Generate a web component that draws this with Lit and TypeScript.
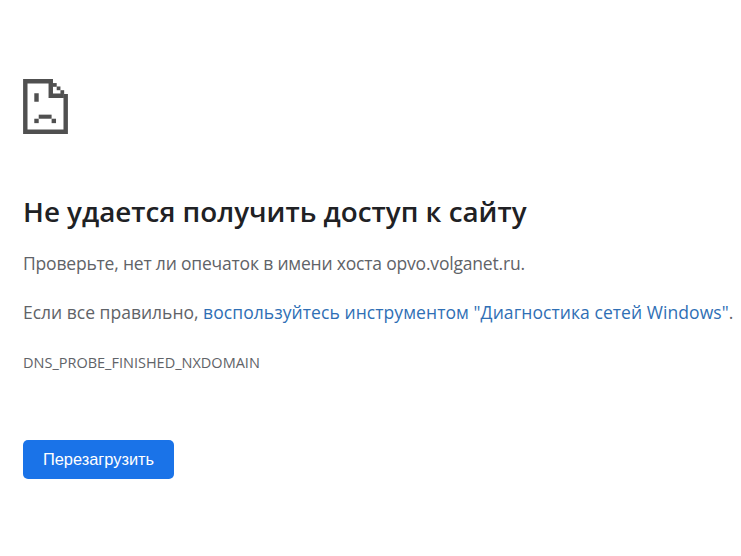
import { LitElement, html, css } from "lit";
import { customElement } from "lit/decorators.js";

@customElement("app-root")
export class AppRoot extends LitElement {
  static styles = css`
    :host {
      display: block;
      height: 556px;
      background: #fff;
      overflow: hidden;
      font-family: "Open Sans", "Noto Sans", sans-serif;
      color: #5f6368;
    }
    .page {
      display: flex;
      flex-direction: column;
      align-items: flex-start;
      padding: 79px 0 0 23px;
    }
    .icon {
      display: block;
      width: 45px;
      height: 55px;
    }
    h1 {
      margin: 57px 0 0;
      font-size: 27.8px;
      line-height: 40px;
      font-weight: 600;
      color: #202124;
      white-space: nowrap;
    }
    p {
      margin: 20px 0 0;
      font-size: 17.5px;
      line-height: 24px;
      white-space: nowrap;
    }
    .tight {
      letter-spacing: -0.19px;
    }
    p + p {
      margin-top: 25px;
    }
    a {
      color: #2f6fb5;
      text-decoration: none;
      letter-spacing: 0.07px;
    }
    .code {
      margin-top: 29px;
      font-size: 14.5px;
      line-height: 20px;
      white-space: nowrap;
    }
    button {
      margin-top: 67px;
      width: 151px;
      height: 39px;
      border: 0;
      border-radius: 5px;
      background: #1a73e8;
      color: #fff;
      font-family: "Liberation Sans", Arial, sans-serif;
      font-size: 16.4px;
      padding: 0;
    }
  `;

  render() {
    return html`
      <div class="page">
        <svg class="icon" viewBox="0 0 132 162" fill="#505050" aria-hidden="true">
          <path d="M0 0H88V13H13V149H119V44H132V162H0Z" />
          <path d="M75 12H88V43H120V56H75Z" />
          <rect x="88" y="12" width="11" height="11" />
          <rect x="99" y="22" width="11" height="11" />
          <rect x="110" y="33" width="11" height="11" />
          <rect x="33" y="42" width="13" height="25" />
          <rect x="46" y="105" width="38" height="12" />
          <rect x="33" y="117" width="13" height="13" />
          <rect x="84" y="117" width="13" height="13" />
        </svg>
        <h1>Не удается получить доступ к сайту</h1>
        <p class="tight">Проверьте, нет ли опечаток в имени хоста opvo.volganet.ru.</p>
        <p>Если все правильно, <a href="#">воспользуйтесь инструментом "Диагностика сетей Windows"</a>.</p>
        <div class="code">DNS_PROBE_FINISHED_NXDOMAIN</div>
        <button>Перезагрузить</button>
      </div>
    `;
  }
}
